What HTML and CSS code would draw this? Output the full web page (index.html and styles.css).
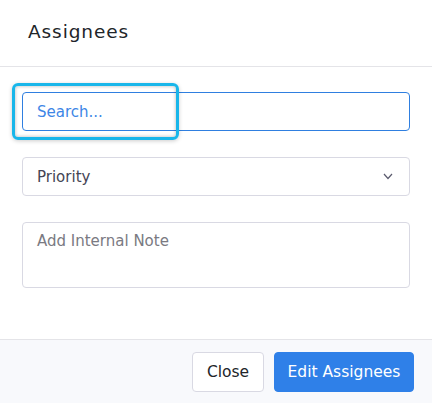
FILE: index.html
```html
<!DOCTYPE html>
<html>
<head>
<meta charset="utf-8">
<link rel="stylesheet" href="styles.css">
</head>
<body>
<div class="modal">
  <div class="header"><h2 class="title">Assignees</h2></div>
  <div class="body">
    <div class="field search-wrap">
      <input class="input search" type="text" placeholder="Search...">
      <div class="highlight"></div>
    </div>
    <div class="field select">
      <span class="select-text">Priority</span>
      <svg class="chev" width="10" height="7" viewBox="0 0 10 7"><path d="M1 1 L5 5.5 L9 1" fill="none" stroke="#5b5b6e" stroke-width="1.2"/></svg>
    </div>
    <textarea class="field note" placeholder="Add Internal Note"></textarea>
  </div>
  <div class="footer">
    <button class="btn btn-close">Close</button>
    <button class="btn btn-primary">Edit Assignees</button>
  </div>
</div>
</body>
</html>
```
FILE: styles.css
```css
* { box-sizing: border-box; }
html, body { margin: 0; padding: 0; background: #fff; }
body { font-family: "DejaVu Sans", "Open Sans", sans-serif; width: 432px; height: 403px; overflow: hidden; }
.modal { display: flex; flex-direction: column; height: 403px; }
.header { height: 67px; border-bottom: 1px solid #e4e4e8; padding: 0 28px; display: flex; align-items: center; }
.title { margin: 0; margin-top: -4px; font-size: 18.5px; font-weight: normal; color: #212529; letter-spacing: 0.9px; }
.body { padding: 25px 22px 0 22px; display: flex; flex-direction: column; gap: 26px; height: 272px; }
.field { width: 388px; border-radius: 4px; }
.search-wrap { position: relative; height: 39px; }
.input { width: 100%; height: 39px; border: 1px solid #2f7fe0; border-radius: 4px; padding: 0 14px; font-family: inherit; font-size: 15px; outline: none; }
.search::placeholder { color: #3d86e6; }
.highlight { position: absolute; left: -10px; top: -9px; width: 167px; height: 57px; border: 3px solid #18b6ea; border-radius: 6px; box-shadow: inset 0 0 3px 1px rgba(0,0,0,0.18), 0 1px 4px rgba(0,0,0,0.2); pointer-events: none; }
.select { height: 39px; border: 1px solid #d9d9e3; display: flex; align-items: center; justify-content: space-between; padding: 0 16px 0 14px; }
.select-text { font-size: 15px; color: #454555; }
.chev { display: block; }
.note { height: 66px; border: 1px solid #d9d9e3; resize: none; padding: 9px 14px; font-family: inherit; font-size: 15px; outline: none; }
.note::placeholder { color: #7a7a82; }
.footer { flex: 1; background: #f8f9fc; border-top: 1px solid #e4e4e8; display: flex; justify-content: flex-end; align-items: flex-start; padding: 12px 18px 0 0; gap: 10px; }
.btn { height: 40px; border-radius: 4px; font-family: inherit; font-size: 15.5px; cursor: pointer; padding: 0; }
.btn-close { width: 72px; background: #fff; border: 1px solid #d9d9e3; color: #212529; }
.btn-primary { width: 140px; background: #2f80e8; border: 1px solid #2f80e8; color: #fff; }
```
